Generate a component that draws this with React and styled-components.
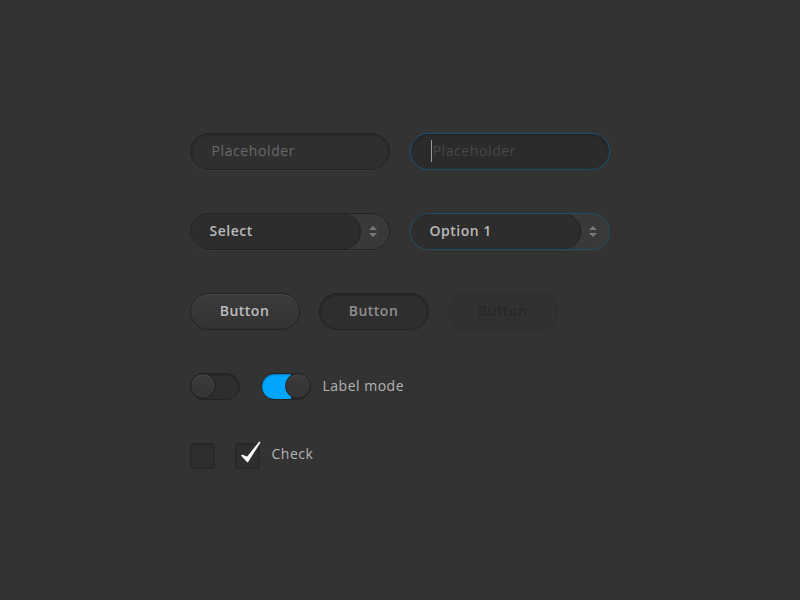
import React from 'react'
import styled, { createGlobalStyle } from 'styled-components'

const Global = createGlobalStyle`
  html, body {
    margin: 0;
    padding: 0;
    background: #333333;
  }
  body {
    font-family: "Open Sans", "Liberation Sans", sans-serif;
  }
`

const Page = styled.div`
  width: 800px;
  height: 600px;
  display: flex;
  align-items: center;
  justify-content: center;
`

const Kit = styled.div`
  display: flex;
  flex-direction: column;
  gap: 43px;
  width: 421px;
  margin-top: 1px;
`

const Row = styled.div`
  display: flex;
  align-items: center;
  gap: ${p => p.gap || 20}px;
`

const Field = styled.div`
  box-sizing: border-box;
  width: 200px;
  height: 37px;
  border-radius: 19px;
  border: 1px solid ${p => (p.focus ? '#1d4d6b' : '#232323')};
  background: ${p => (p.focus ? '#2b2b2b' : '#2f2f2f')};
  box-shadow: ${p => (p.focus
    ? 'inset 0 1px 2px rgba(0,0,0,0.35), 0 0 1px rgba(0,120,180,0.4)'
    : 'inset 0 1px 2px rgba(0,0,0,0.25), 0 1px 0 rgba(255,255,255,0.04)')};
  display: flex;
  align-items: center;
  padding-left: ${p => (p.focus ? 20 : 21)}px;
  padding-bottom: 2px;
  font-size: 14px;
  letter-spacing: 0.6px;
  color: ${p => (p.focus ? '#474747' : '#6a6a6a')};
`

const Caret = styled.span`
  width: 1px;
  height: 22px;
  background: #9a9a9a;
  margin-right: 1px;
  margin-top: 2px;
`

const SelectBox = styled.div`
  box-sizing: border-box;
  width: 200px;
  height: 37px;
  border-radius: 19px;
  border: 1px solid ${p => (p.focus ? '#1d4d6b' : '#232323')};
  background: #393939;
  display: flex;
  overflow: hidden;
  box-shadow: 0 1px 0 rgba(255,255,255,0.03);
`

const SelectValue = styled.div`
  flex: 1;
  display: flex;
  align-items: center;
  padding-left: 19px;
  padding-bottom: 2px;
  background: #2d2d2d;
  border-radius: 0 18px 18px 0;
  box-shadow: 1px 0 1px rgba(0,0,0,0.45);
  font-size: 14px;
  font-weight: 600;
  letter-spacing: 0.5px;
  color: #b9b9b9;
`

const Arrows = styled.div`
  width: 27px;
  display: flex;
  flex-direction: column;
  align-items: center;
  justify-content: center;
  gap: 3px;
  padding-right: 2px;
`

const Tri = styled.span`
  width: 0;
  height: 0;
  border-left: 4px solid transparent;
  border-right: 4px solid transparent;
  ${p => (p.down ? 'border-top: 4px solid #7a7a7a;' : 'border-bottom: 4px solid #7a7a7a;')}
`

const Button = styled.div`
  box-sizing: border-box;
  width: 110px;
  height: 37px;
  border-radius: 19px;
  display: flex;
  align-items: center;
  justify-content: center;
  padding-bottom: 2px;
  font-size: 14px;
  font-weight: 600;
  letter-spacing: 0.5px;
  ${p => p.variant === 'primary' && `
    border: 1px solid #222;
    background: linear-gradient(#3b3b3b, #333);
    box-shadow: inset 0 1px 0 rgba(255,255,255,0.07);
    color: #bdbdbd;
  `}
  ${p => p.variant === 'secondary' && `
    border: 1px solid #222;
    background: #2e2e2e;
    box-shadow: inset 0 1px 2px rgba(0,0,0,0.3);
    color: #8f8f8f;
  `}
  ${p => p.variant === 'disabled' && `
    border: 1px solid #2d2d2d;
    background: #313131;
    color: #282828;
  `}
`

const Toggle = styled.div`
  box-sizing: border-box;
  width: 50px;
  height: 27px;
  border-radius: 14px;
  border: 1px solid #232323;
  background: ${p => (p.on ? 'linear-gradient(90deg, #00a6ff 60%, #2e2e2e 60%)' : '#2e2e2e')};
  display: flex;
  align-items: center;
  justify-content: ${p => (p.on ? 'flex-end' : 'flex-start')};
  box-shadow: inset 0 1px 2px rgba(0,0,0,0.3);
`

const Knob = styled.span`
  box-sizing: border-box;
  width: 26px;
  height: 26px;
  margin: -1px;
  border-radius: 50%;
  border: 1px solid #1f1f1f;
  background: linear-gradient(#3b3b3b, #343434);
  box-shadow: inset 0 1px 0 rgba(255,255,255,0.05);
`

const Label = styled.span`
  font-size: 14px;
  letter-spacing: 0.5px;
  color: #b3b3b3;
  margin-bottom: ${p => (p.lift ? 5 : 2)}px;
`

const Box = styled.div`
  box-sizing: border-box;
  width: 25px;
  height: 26px;
  border-radius: 3px;
  border: 1px solid #262626;
  background: #2e2e2e;
  box-shadow: inset 0 1px 2px rgba(0,0,0,0.2);
  position: relative;
`

const Tick = styled.svg`
  position: absolute;
  left: 3px;
  top: -4px;
`

const Check = ({ checked }) => (
  <Box>
    {checked && (
      <Tick width="24" height="26" viewBox="0 0 24 26">
        <path d="M3 15.5 L8.5 21.5 L20.5 2.5 L8.5 17.5 Z" fill="#fafafa" stroke="#fafafa" strokeWidth="1.6" strokeLinejoin="round" />
      </Tick>
    )}
  </Box>
)

const Select = ({ value, focus }) => (
  <SelectBox focus={focus}>
    <SelectValue>{value}</SelectValue>
    <Arrows>
      <Tri />
      <Tri down />
    </Arrows>
  </SelectBox>
)

export default function App() {
  return (
    <>
      <Global />
      <Page>
        <Kit>
          <Row>
            <Field>Placeholder</Field>
            <Field focus><Caret />Placeholder</Field>
          </Row>
          <Row>
            <Select value="Select" />
            <Select value="Option 1" focus />
          </Row>
          <Row gap={19}>
            <Button variant="primary">Button</Button>
            <Button variant="secondary">Button</Button>
            <Button variant="disabled">Button</Button>
          </Row>
          <Row gap={21}>
            <Toggle><Knob /></Toggle>
            <Row gap={12}>
              <Toggle on><Knob /></Toggle>
              <Label>Label mode</Label>
            </Row>
          </Row>
          <Row gap={20}>
            <Check />
            <Row gap={12}>
              <Check checked />
              <Label lift>Check</Label>
            </Row>
          </Row>
        </Kit>
      </Page>
    </>
  )
}
